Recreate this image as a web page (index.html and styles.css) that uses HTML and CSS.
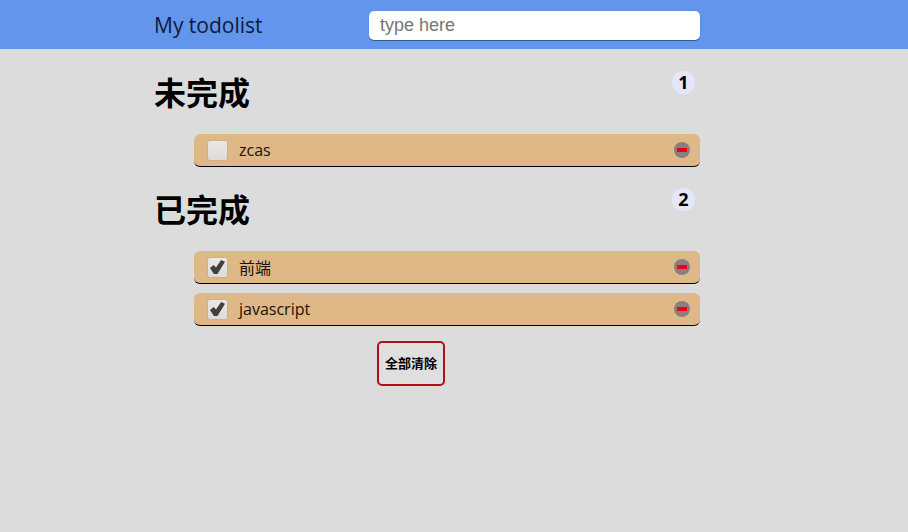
FILE: index.html
```html
<!DOCTYPE html>
<html lang="en">
<head>
    <meta charset="UTF-8">
    <meta name="viewport" content="width=device-width, initial-scale=1.0">
    <title>My todolist</title>
    <link rel="stylesheet" href="styles.css">
</head>
<body>

<header class="header">
    <div class="header-inner">
        <div class="logo">My todolist</div>
        <input class="new-todo" type="text" placeholder="type here">
    </div>
</header>

<div class="container">
    <div class="section-head">
        <h2>未完成</h2>
        <span class="count">1</span>
    </div>
    <ul class="todo-list">
        <li class="todo">
            <input class="check" type="checkbox">
            <span class="todo-text">zcas</span>
            <span class="remove"></span>
        </li>
    </ul>

    <div class="section-head">
        <h2>已完成</h2>
        <span class="count">2</span>
    </div>
    <ul class="todo-list">
        <li class="todo">
            <input class="check" type="checkbox" checked>
            <span class="todo-text">前端</span>
            <span class="remove"></span>
        </li>
        <li class="todo">
            <input class="check" type="checkbox" checked>
            <span class="todo-text">javascript</span>
            <span class="remove"></span>
        </li>
    </ul>

    <div class="actions">
        <button class="clear" type="button">全部清除</button>
    </div>
</div>

</body>
</html>
```

FILE: styles.css
```css
body {
    font-family: 'Open Sans', 'Noto Sans CJK SC', sans-serif;
    background-color: #dcdcdc;
    margin: 0;
    padding: 0;
    color: #000;
}
.header {
    background-color: #6495ed;
    height: 49px;
}
.header-inner {
    width: 546px;
    margin-left: 154px;
    display: flex;
    align-items: center;
    justify-content: space-between;
    height: 49px;
}
.logo {
    font-size: 21px;
    color: #0b1c3a;
}
.new-todo {
    box-sizing: border-box;
    width: 331px;
    height: 29px;
    margin-top: 2px;
    padding: 0 11px;
    border: none;
    border-radius: 5px;
    background-color: #fff;
    box-shadow: 0 1px 0 #3a5a8c, 0 0 1px #3d5f9f;
    font-family: 'Liberation Sans', sans-serif;
    font-size: 18px;
}
.new-todo::placeholder {
    color: #757575;
}
.container {
    width: 546px;
    margin-left: 154px;
    padding-top: 1px;
}
.section-head {
    display: flex;
    justify-content: space-between;
    align-items: flex-start;
    height: 84px;
}
.section-head h2 {
    margin: 19px 0 0;
    font-size: 32px;
    line-height: 44px;
    font-weight: bold;
    font-family: 'Noto Sans CJK SC', sans-serif;
}
.count {
    width: 23px;
    height: 23px;
    margin: 21px 5px 0 0;
    border-radius: 50%;
    background-color: #e6e6fa;
    font-size: 18px;
    font-weight: bold;
    line-height: 23px;
    text-align: center;
}
.todo-list {
    list-style: none;
    margin: 0 0 0 40px;
    padding: 0;
}
.todo {
    box-sizing: border-box;
    display: flex;
    align-items: center;
    height: 33px;
    margin-bottom: 9px;
    padding: 0 10px 0 14px;
    background-color: #deb887;
    border-bottom: 1px solid #000;
    border-radius: 6px;
}
.todo-list .todo:last-child {
    margin-bottom: 0;
}
.check {
    appearance: none;
    box-sizing: border-box;
    width: 19px;
    height: 19px;
    margin: 0;
    display: flex;
    align-items: center;
    justify-content: center;
    background: linear-gradient(#e9e8e6, #dedbd7);
    border-radius: 2px;
    box-shadow: 0 0 2px #a89f92;
}
.check:checked::after {
    content: "";
    width: 15px;
    height: 14px;
    background-color: #404040;
    clip-path: polygon(0 58%, 24% 36%, 40% 54%, 74% 0, 100% 12%, 50% 100%, 26% 100%);
}
.todo-text {
    flex: 1;
    margin-left: 12px;
    font-size: 16px;
    color: #1a1208;
}
.remove {
    display: flex;
    align-items: center;
    justify-content: center;
    width: 16px;
    height: 16px;
    border-radius: 50%;
    background-color: #8a7f80;
}
.remove::after {
    content: "";
    width: 10px;
    height: 4px;
    background-color: #f0000f;
}
.actions {
    margin-top: 15px;
    margin-left: 223px;
}
.clear {
    box-sizing: border-box;
    width: 68px;
    height: 45px;
    padding: 0 0 3px;
    background-color: #dfdfdf;
    border: 2px solid #b01018;
    border-radius: 5px;
    font-family: 'Noto Sans CJK SC', sans-serif;
    font-size: 13px;
    font-weight: bold;
    color: #000;
}
```
